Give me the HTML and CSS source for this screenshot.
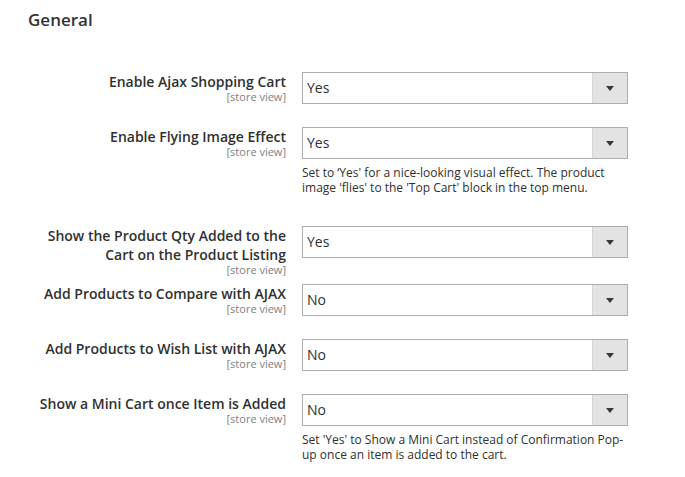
FILE: index.html
```html
<!DOCTYPE html>
<html lang="en">
<head>
<meta charset="utf-8">
<title>General</title>
<link rel="stylesheet" href="styles.css">
</head>
<body>
<div class="section">
  <h2 class="section-title">General</h2>
  <div class="fields">
    <div class="row">
      <div class="label"><span class="label-text">Enable Ajax Shopping Cart</span><span class="scope">[store view]</span></div>
      <div class="control">
        <div class="select"><span class="value">Yes</span><span class="arrow"><span class="tri"></span></span></div>
      </div>
    </div>
    <div class="row">
      <div class="label"><span class="label-text">Enable Flying Image Effect</span><span class="scope">[store view]</span></div>
      <div class="control">
        <div class="select"><span class="value">Yes</span><span class="arrow"><span class="tri"></span></span></div>
        <p class="note">Set to ‘Yes' for a nice-looking visual effect. The product image 'flies' to the 'Top Cart' block in the top menu.</p>
      </div>
    </div>
    <div class="row">
      <div class="label"><span class="label-text">Show the Product Qty Added to the Cart on the Product Listing</span><span class="scope">[store view]</span></div>
      <div class="control">
        <div class="select"><span class="value">Yes</span><span class="arrow"><span class="tri"></span></span></div>
      </div>
    </div>
    <div class="row">
      <div class="label"><span class="label-text">Add Products to Compare with AJAX</span><span class="scope">[store view]</span></div>
      <div class="control">
        <div class="select"><span class="value">No</span><span class="arrow"><span class="tri"></span></span></div>
      </div>
    </div>
    <div class="row">
      <div class="label"><span class="label-text">Add Products to Wish List with AJAX</span><span class="scope">[store view]</span></div>
      <div class="control">
        <div class="select"><span class="value">No</span><span class="arrow"><span class="tri"></span></span></div>
      </div>
    </div>
    <div class="row">
      <div class="label"><span class="label-text">Show a Mini Cart once Item is Added</span><span class="scope">[store view]</span></div>
      <div class="control">
        <div class="select"><span class="value">No</span><span class="arrow"><span class="tri"></span></span></div>
        <p class="note">Set 'Yes' to Show a Mini Cart instead of Confirmation Pop-up once an item is added to the cart.</p>
      </div>
    </div>
  </div>
</div>
</body>
</html>
```
FILE: styles.css
```css
* { box-sizing: border-box; }

body {
  margin: 0;
  background: #ffffff;
  font-family: "Open Sans", "Noto Sans", sans-serif;
  color: #303030;
}

.section {
  padding-top: 10px;
}

.section-title {
  margin: 0;
  padding-left: 28px;
  font-size: 17px;
  line-height: 20px;
  font-weight: 600;
  color: #333333;
}

.fields {
  padding-top: 42px;
}

.row {
  display: grid;
  grid-template-columns: 256px 326px;
  column-gap: 16px;
  padding-left: 30px;
  align-items: start;
}

.label {
  text-align: right;
  padding-top: 0;
  padding-bottom: 8px;
}

.label-text {
  display: block;
  font-size: 14px;
  line-height: 19px;
  font-weight: 600;
  color: #303030;
}

.scope {
  display: block;
  font-size: 11px;
  line-height: 12px;
  color: #808080;
}

.control {
  padding-bottom: 23px;
}

.select {
  display: flex;
  height: 32px;
  border: 1px solid #adadad;
  background: #ffffff;
}

.value {
  flex: 1;
  padding-left: 4px;
  font-size: 14px;
  line-height: 30px;
  color: #303030;
}

.arrow {
  width: 35px;
  background: #e3e3e3;
  border-left: 1px solid #d6d6d6;
  display: flex;
  align-items: center;
  justify-content: center;
}

.tri {
  width: 0;
  height: 0;
  margin-top: 1px;
  border-left: 4px solid transparent;
  border-right: 4px solid transparent;
  border-top: 5px solid #41362f;
}

.note {
  margin: 6px 0 8px;
  font-size: 12px;
  line-height: 15px;
  color: #303030;
}
```
